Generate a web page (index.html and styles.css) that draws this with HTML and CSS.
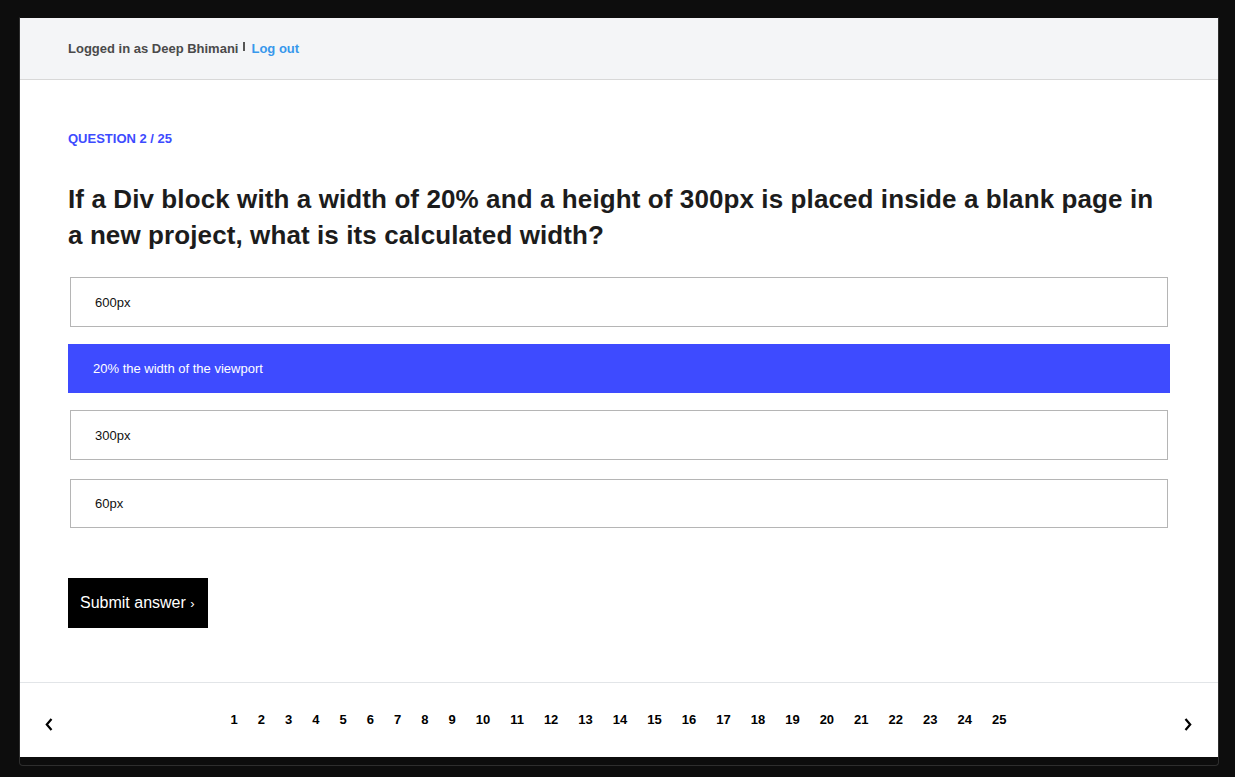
FILE: index.html
```html
<!DOCTYPE html>
<html>
<head>
<meta charset="utf-8">
<link rel="stylesheet" href="styles.css">
</head>
<body>
<div class="frame">
  <div class="page">
    <header class="topbar">
      <span class="user">Logged in as Deep Bhimani</span>
      <span class="sep"></span>
      <a class="logout" href="#">Log out</a>
    </header>
    <main class="main">
      <div class="qlabel">QUESTION 2 / 25</div>
      <h1 class="question">If a Div block with a width of 20% and a height of 300px is placed inside a blank page in a new project, what is its calculated width?</h1>
      <div class="options">
        <div class="option">600px</div>
        <div class="option selected">20% the width of the viewport</div>
        <div class="option">300px</div>
        <div class="option last">60px</div>
      </div>
      <button class="submit">Submit answer <span class="chev">›</span></button>
    </main>
    <footer class="pager">
      <span class="arrow"><svg width="8" height="13" viewBox="0 0 8 13"><polyline points="6.5,1 1.8,6.5 6.5,12" fill="none" stroke="#000" stroke-width="2.2"/></svg></span>
      <nav class="nums">
        <a>1</a><a>2</a><a>3</a><a>4</a><a>5</a><a>6</a><a>7</a><a>8</a><a>9</a><a>10</a><a>11</a><a>12</a><a>13</a><a>14</a><a>15</a><a>16</a><a>17</a><a>18</a><a>19</a><a>20</a><a>21</a><a>22</a><a>23</a><a>24</a><a>25</a>
      </nav>
      <span class="arrow"><svg width="8" height="13" viewBox="0 0 8 13"><polyline points="1.5,1 6.2,6.5 1.5,12" fill="none" stroke="#000" stroke-width="2.2"/></svg></span>
    </footer>
  </div>
</div>
</body>
</html>
```
FILE: styles.css
```css
* { box-sizing: border-box; }
html, body { margin: 0; padding: 0; }
body {
  background: #0d0d0d;
  width: 1235px;
  height: 777px;
  overflow: hidden;
  font-family: "Liberation Sans", Arial, sans-serif;
}
.frame {
  margin: 17px 0 0 19px;
  width: 1200px;
  height: 749px;
  border: 1px solid #2e2e2e;
  border-top-color: #0d0d0d;
  border-radius: 0 0 4px 4px;
  background: #0d0d0d;
}
.page {
  width: 1198px;
  height: 739px;
  background: #fff;
  display: flex;
  flex-direction: column;
}
.topbar {
  height: 62px;
  background: #f4f5f7;
  border-bottom: 1px solid #d8d8d8;
  display: flex;
  align-items: center;
  padding: 0 48px;
  font-size: 13px;
  font-weight: bold;
}
.user { color: #4a4a4a; }
.sep {
  width: 2px;
  height: 9px;
  background: #555;
  margin: -4px 6px 0 5px;
}
.logout { color: #3898ec; text-decoration: none; }
.main {
  flex: 1;
  padding: 51px 48px 0 48px;
}
.qlabel {
  color: #3d4bff;
  font-size: 13px;
  font-weight: bold;
  line-height: 16px;
}
.question {
  margin: 34px 0 24px 0;
  font-size: 26px;
  line-height: 36px;
  font-weight: bold;
  color: #1c1c1c;
  letter-spacing: 0.1px;
}
.options {
  display: flex;
  flex-direction: column;
  gap: 17px;
}
.option {
  height: 50px;
  margin: 0 2px;
  border: 1px solid #b5b5b5;
  display: flex;
  align-items: center;
  padding-left: 24px;
  font-size: 13px;
  color: #111;
}
.option.last { margin-top: 2px; height: 49px; }
.option.selected {
  margin: 0;
  height: 49px;
  border: none;
  background: #3e4bff;
  color: #fff;
  padding-left: 25px;
}
.submit {
  margin-top: 50px;
  width: 140px;
  height: 50px;
  background: #000;
  color: #fff;
  border: none;
  font-family: "Liberation Sans", Arial, sans-serif;
  font-size: 16px;
  text-align: left;
  padding: 0 12px;
}
.chev { font-size: 13px; }
.pager {
  height: 75px;
  border-top: 1px solid #e2e5e8;
  display: flex;
  align-items: center;
  justify-content: space-between;
  padding: 0 26px 0 25px;
}
.arrow { display: flex; margin-top: 9px; }
.nums {
  display: flex;
  gap: 20px;
  font-size: 13px;
  font-weight: bold;
  color: #000;
  margin-top: -2px;
}
```
